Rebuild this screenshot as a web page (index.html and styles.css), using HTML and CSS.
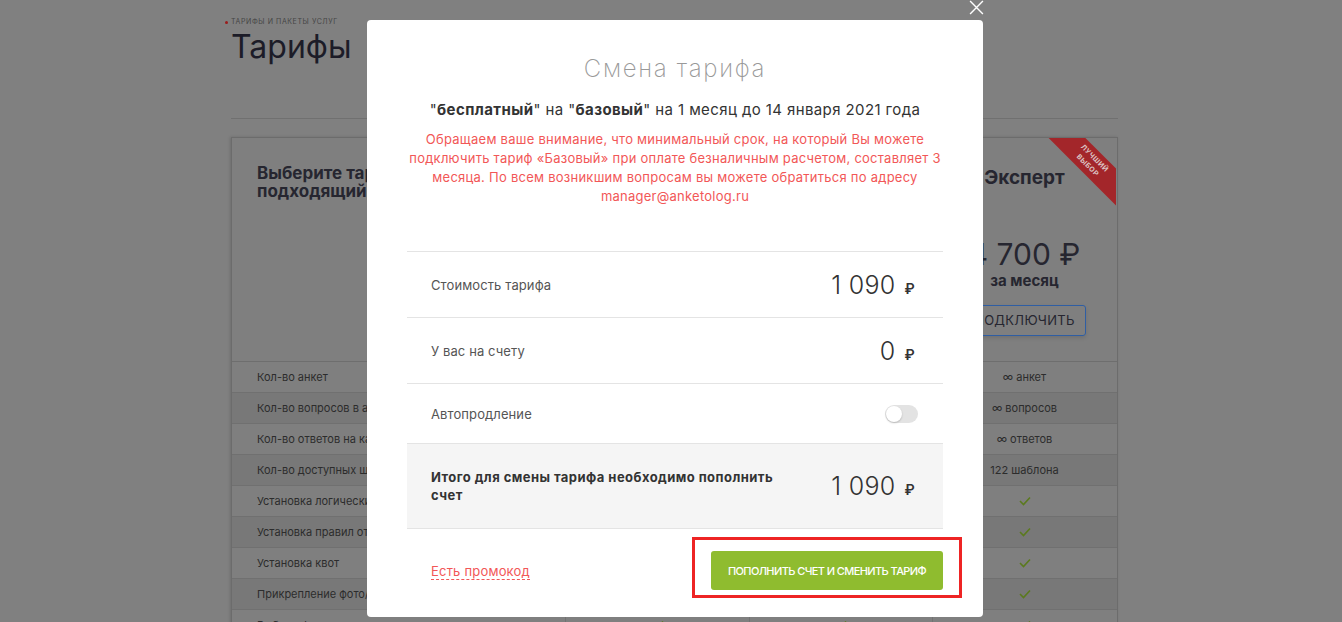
FILE: index.html
```html
<!DOCTYPE html>
<html lang="ru">
<head>
<meta charset="utf-8">
<title>Тарифы</title>
<link rel="stylesheet" href="styles.css">
</head>
<body>
<div class="page">
  <div class="crumb"><span class="dot"></span>ТАРИФЫ И ПАКЕТЫ УСЛУГ</div>
  <h1 class="title">Тарифы</h1>
  <div class="sep"></div>
  <div class="card">
    <div class="thead">
      <div class="th th-first">Выберите тариф,<br>подходящий для вас</div>
      <div class="th th-plan"></div>
      <div class="th th-plan"></div>
      <div class="th th-plan">
        <div class="ribbon"><div class="ribbon-band">Лучший<br>выбор</div></div>
        <div class="plan-name">Эксперт</div>
        <div class="plan-price">4 700 ₽</div>
        <div class="plan-per">за месяц</div>
        <div class="plan-btn">Подключить</div>
      </div>
    </div>
    <div class="row"><div class="cell label">Кол-во анкет</div><div class="cell"></div><div class="cell"></div><div class="cell">∞ анкет</div></div>
    <div class="row alt"><div class="cell label">Кол-во вопросов в анкете</div><div class="cell"></div><div class="cell"></div><div class="cell">∞ вопросов</div></div>
    <div class="row"><div class="cell label">Кол-во ответов на каждый вопрос</div><div class="cell"></div><div class="cell"></div><div class="cell">∞ ответов</div></div>
    <div class="row alt"><div class="cell label">Кол-во доступных шаблонов</div><div class="cell"></div><div class="cell"></div><div class="cell">122 шаблона</div></div>
    <div class="row"><div class="cell label">Установка логических переходов</div><div class="cell"><svg class="chk" viewBox="0 0 12 10"><polyline points="1,5 4.5,8.5 11,1.5"/></svg></div><div class="cell"><svg class="chk" viewBox="0 0 12 10"><polyline points="1,5 4.5,8.5 11,1.5"/></svg></div><div class="cell"><svg class="chk" viewBox="0 0 12 10"><polyline points="1,5 4.5,8.5 11,1.5"/></svg></div></div>
    <div class="row alt"><div class="cell label">Установка правил отображения</div><div class="cell"><svg class="chk" viewBox="0 0 12 10"><polyline points="1,5 4.5,8.5 11,1.5"/></svg></div><div class="cell"><svg class="chk" viewBox="0 0 12 10"><polyline points="1,5 4.5,8.5 11,1.5"/></svg></div><div class="cell"><svg class="chk" viewBox="0 0 12 10"><polyline points="1,5 4.5,8.5 11,1.5"/></svg></div></div>
    <div class="row"><div class="cell label">Установка квот</div><div class="cell"><svg class="chk" viewBox="0 0 12 10"><polyline points="1,5 4.5,8.5 11,1.5"/></svg></div><div class="cell"><svg class="chk" viewBox="0 0 12 10"><polyline points="1,5 4.5,8.5 11,1.5"/></svg></div><div class="cell"><svg class="chk" viewBox="0 0 12 10"><polyline points="1,5 4.5,8.5 11,1.5"/></svg></div></div>
    <div class="row alt"><div class="cell label">Прикрепление фото/видео</div><div class="cell"><svg class="chk" viewBox="0 0 12 10"><polyline points="1,5 4.5,8.5 11,1.5"/></svg></div><div class="cell"><svg class="chk" viewBox="0 0 12 10"><polyline points="1,5 4.5,8.5 11,1.5"/></svg></div><div class="cell"><svg class="chk" viewBox="0 0 12 10"><polyline points="1,5 4.5,8.5 11,1.5"/></svg></div></div>
    <div class="row"><div class="cell label">Выбор оформления анкеты</div><div class="cell"><svg class="chk" viewBox="0 0 12 10"><polyline points="1,5 4.5,8.5 11,1.5"/></svg></div><div class="cell"><svg class="chk" viewBox="0 0 12 10"><polyline points="1,5 4.5,8.5 11,1.5"/></svg></div><div class="cell"><svg class="chk" viewBox="0 0 12 10"><polyline points="1,5 4.5,8.5 11,1.5"/></svg></div></div>
  </div>
</div>

<div class="modal">
  <h2 class="m-title">Смена тарифа</h2>
  <p class="m-sub">"<b>бесплатный</b>" на "<b>базовый</b>" на 1 месяц до 14 января 2021 года</p>
  <p class="m-note">Обращаем ваше внимание, что минимальный срок, на который Вы можете<br>подключить тариф «Базовый» при оплате безналичным расчетом, составляет 3<br>месяца. По всем возникшим вопросам вы можете обратиться по адресу<br>manager@anketolog.ru</p>
  <div class="m-rows">
    <div class="m-row"><span>Стоимость тарифа</span><span class="price">1 090<span class="rub">₽</span></span></div>
    <div class="m-row"><span>У вас на счету</span><span class="price">0<span class="rub">₽</span></span></div>
    <div class="m-row auto"><span>Автопродление</span><span class="toggle"><span class="knob"></span></span></div>
    <div class="m-row total"><span class="total-label">Итого для смены тарифа необходимо пополнить<br>счет</span><span class="price">1 090<span class="rub">₽</span></span></div>
  </div>
  <div class="m-foot">
    <a class="promo">Есть промокод</a>
    <div class="frame"><button class="pay">Пополнить счет и сменить тариф</button></div>
  </div>
</div>
<div class="close"><svg viewBox="0 0 14 14"><path d="M1 1L13 13M13 1L1 13"/></svg></div>
</body>
</html>
```
FILE: styles.css
```css
html, body { margin: 0; padding: 0; }
body {
  background: #808080;
  font-family: Inter, "Open Sans", sans-serif;
  height: 622px;
  overflow: hidden;
  position: relative;
}
.page { width: 887px; margin-left: 231px; }
.crumb {
  margin-top: 17px; margin-left: -6px;
  font-size: 7px; line-height: 10px; letter-spacing: .6px;
  color: #454545;
  display: flex; align-items: center; gap: 3px;
}
.dot { width: 3px; height: 3px; border-radius: 50%; background: #9a1c1c; }
.title { margin: 1px 0 0; font-size: 32px; font-weight: 400; line-height: 38px; color: #1c1c28; }
.sep { margin-top: 52px; height: 1px; background: #707070; }
.card {
  margin-top: 18px;
  border: 1px solid #6c6c6c;
  background: #7f7f7f;
  position: relative;
  box-shadow: -1px 0 3px rgba(0,0,0,.15);
}
.thead, .row { display: grid; grid-template-columns: 333px 184px 183px 184px; }
.thead { height: 223px; border-bottom: 1px solid #6e6e6e; }
.th { border-left: 1px solid #727272; position: relative; overflow: hidden; }
.th-first { border-left: none; padding: 26px 0 0 25px; font-size: 17px; font-weight: 700; line-height: 18px; color: #262630; }
.th-plan { text-align: center; padding-top: 28px; color: #262630; }
.plan-name { font-size: 19px; font-weight: 700; line-height: 24px; }
.plan-price { margin-top: 46px; font-size: 30px; line-height: 36px; font-weight: 400; }
.plan-per { font-size: 15px; font-weight: 700; line-height: 18px; }
.plan-btn {
  margin: 15px auto 0; width: 122px; height: 31px; box-sizing: border-box;
  border: 1px solid #2f5ea3; border-radius: 3px;
  font-size: 13px; line-height: 29px; text-transform: uppercase; letter-spacing: .3px;
  color: #262630;
  box-shadow: 0 2px 4px rgba(0,0,0,.12);
}
.ribbon { position: absolute; top: 0; right: 0; width: 68px; height: 68px; overflow: hidden; }
.ribbon-band {
  position: absolute; left: -7px; top: 11px; width: 100px; height: 26px;
  transform: rotate(45deg);
  background: #a3262a;
  color: #dcc4c4;
  font-size: 7px; font-weight: 700; line-height: 10px; letter-spacing: .5px;
  text-transform: uppercase; text-align: center;
  padding-top: 3px; box-sizing: border-box;
}
.row { height: 31px; box-sizing: border-box; border-bottom: 1px solid #707070; }
.row.alt { background: #787878; }
.cell {
  border-left: 1px solid #727272;
  display: flex; align-items: center; justify-content: center;
  font-size: 11px; color: #2c2c2c;
}
.cell.label { border-left: none; justify-content: flex-start; padding-left: 25px; }
.chk { width: 12px; height: 10px; fill: none; stroke: #5b7a1e; stroke-width: 1.6; }

.modal {
  position: absolute; left: 367px; top: 20px; width: 616px;
  box-sizing: border-box; padding: 34px 40px 19px;
  background: #fff; border-radius: 4px;
}
.m-title { margin: 0; text-align: center; font-size: 24px; font-weight: 200; line-height: 30px; color: #999; letter-spacing: 1.7px; }
.m-sub { margin: 16px 0 0; text-align: center; font-size: 15px; line-height: 20px; color: #333; letter-spacing: .4px; }
.m-sub b { font-weight: 700; }
.m-note { margin: 10px 0 0; text-align: center; font-size: 13px; line-height: 19px; color: #f25757; letter-spacing: .25px; }
.m-rows { margin-top: 45px; border-top: 1px solid #e4e4e4; }
.m-row {
  display: flex; justify-content: space-between; align-items: center;
  height: 66px; box-sizing: border-box; padding: 0 28px 0 24px;
  border-bottom: 1px solid #e4e4e4;
  font-size: 13px; color: #555; letter-spacing: .1px;
}
.m-row.auto { height: 60px; padding-right: 25px; }
.m-row.total { height: 85px; background: #f5f5f5; font-weight: 700; color: #333; }
.total-label { line-height: 18px; letter-spacing: .45px; }
.price { font-size: 25px; font-weight: 300; color: #333; display: flex; align-items: baseline; letter-spacing: .3px; }
.rub { font-size: 14px; font-weight: 600; margin-left: 9px; }
.toggle {
  width: 33px; height: 18px; border-radius: 9px; background: #e3e3e3;
  display: flex; align-items: center; padding: 0 1px; box-sizing: border-box;
}
.knob { width: 16px; height: 16px; border-radius: 50%; background: #fff; box-shadow: 0 1px 2px rgba(0,0,0,.2); }
.m-foot {
  display: flex; justify-content: space-between; align-items: center;
  padding: 8px 0 0 24px; margin-right: -19px;
}
.promo {
  margin-top: 7px;
  font-size: 13px; line-height: 16px; color: #f25757; letter-spacing: .2px;
  border-bottom: 1px dashed #f25757;
}
.frame { border: 3px solid #ee2424; padding: 11px 16px 5px; }
.pay {
  display: block; width: 232px; height: 39px;
  border: none; border-radius: 3px; background: #8fbc2f;
  color: #fff; font-family: inherit; font-size: 11px; font-weight: 500;
  text-transform: uppercase; letter-spacing: -.6px;
}
.close { position: absolute; left: 969px; top: 0; width: 15px; height: 15px; }
.close svg { width: 15px; height: 15px; stroke: #fff; stroke-width: 1.3; fill: none; display: block; }
```
